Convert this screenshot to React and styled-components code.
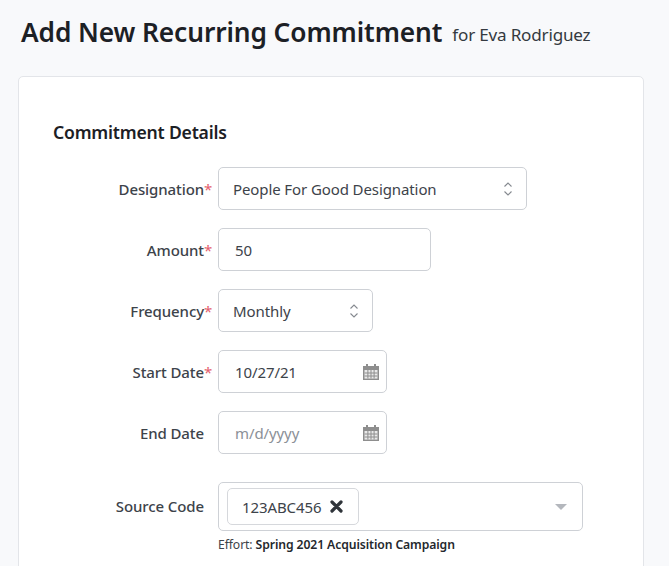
import React from 'react'
import styled, { createGlobalStyle } from 'styled-components'

const GlobalStyle = createGlobalStyle`
	html, body {
		margin: 0;
		height: 100%;
		overflow: hidden;
		background: #f8f9fb;
	}
	body {
		font-family: "Noto Sans", "Open Sans", sans-serif;
		color: #212529;
	}
`

const Page = styled.div`
	padding: 14px 25px 0 18px;
	height: 566px;
	box-sizing: border-box;
	overflow: hidden;
`

const Header = styled.header`
	display: flex;
	align-items: flex-start;
	gap: 10px;
	padding-left: 3px;
	height: 46px;
`

const Title = styled.h1`
	margin: 0;
	font-size: 26.3px;
	line-height: 36px;
	font-weight: 600;
	color: #1c2025;
	letter-spacing: -0.1px;
`

const Subtitle = styled.span`
	margin-top: 9px;
	font-size: 17.1px;
	line-height: 24px;
	color: #343a40;
	letter-spacing: -0.2px;
`

const Card = styled.section`
	margin-top: 16px;
	background: #fff;
	border: 1px solid #e3e5e9;
	border-radius: 5px;
	padding: 43px 34px 60px;
	height: 600px;
	box-sizing: border-box;
`

const SectionTitle = styled.h2`
	margin: 0 0 23px;
	font-size: 17.6px;
	line-height: 24px;
	font-weight: 600;
	color: #1c2025;
	letter-spacing: -0.2px;
`

const Form = styled.div`
	display: flex;
	flex-direction: column;
	gap: 18px;
`

const Row = styled.div`
	display: grid;
	grid-template-columns: 151px 1fr;
	column-gap: 14px;
	align-items: ${(p) => (p.$top ? 'start' : 'center')};
	margin-top: ${(p) => p.$push || 0}px;
`

const Label = styled.label`
	justify-self: end;
	position: relative;
	font-size: 15px;
	font-weight: 500;
	color: #3d434a;
	letter-spacing: -0.1px;
	line-height: 20px;
	margin-top: ${(p) => (p.$top ? 14 : 0)}px;
	${(p) => p.$required && `
		&::after {
			content: '*';
			position: absolute;
			left: 100%;
			top: 0;
			color: #e4606d;
			font-weight: 400;
		}
	`}
`

const Control = styled.div`
	display: flex;
	align-items: center;
	justify-content: space-between;
	box-sizing: border-box;
	width: ${(p) => p.$width}px;
	height: 43px;
	padding: ${(p) => p.$padding || '0 13px 0 14px'};
	background: #fff;
	border: 1px solid #ced1d6;
	border-radius: 5px;
	font-size: 15px;
	letter-spacing: -0.1px;
	color: ${(p) => (p.$placeholder ? '#8b9097' : '#3d434a')};
`

const MultiControl = styled(Control)`
	height: 49px;
	padding: 0 15px 0 8px;
`

const Chip = styled.div`
	display: flex;
	align-items: center;
	gap: 9px;
	height: 37px;
	padding: 0 15px 0 14px;
	box-sizing: border-box;
	border: 1px solid #d6d8dc;
	border-radius: 5px;
	color: #3d434a;
`

const Help = styled.div`
	margin-top: 6px;
	font-size: 12.2px;
	line-height: 16px;
	color: #3d434a;
	letter-spacing: -0.1px;

	strong {
		font-weight: 600;
		color: #24282d;
	}
`

const Caret = styled.span`
	width: 0;
	height: 0;
	border-left: 6.5px solid transparent;
	border-right: 6.5px solid transparent;
	border-top: 6px solid #b4b7bd;
`

const Updown = () => (
	<svg width="10" height="16" viewBox="0 0 10 16" fill="none" stroke="#85898f" strokeWidth="1.1">
		<path d="M1.5 5.5 5 2l3.5 3.5" />
		<path d="M1.5 10.5 5 14l3.5-3.5" />
	</svg>
)

const Calendar = () => (
	<svg width="16" height="16" viewBox="0 0 16 16">
		<path fill="#8e8e8e" d="M3 0h2v2h6V0h2v2h3v14H0V2h3z" />
		<path fill="#e9e9e9" d="M1.5 6h13v8.6h-13z" />
		<path fill="#8e8e8e" d="M1.5 8.4h13v1h-13zM1.5 11.4h13v1h-13zM4.4 6h1v8.6h-1zM7.5 6h1v8.6h-1zM10.6 6h1v8.6h-1z" />
	</svg>
)

const Remove = () => (
	<svg width="13" height="13" viewBox="0 0 13 13" stroke="#2f343a" strokeWidth="3.2" strokeLinecap="round">
		<path d="M2 2l9 9M11 2l-9 9" />
	</svg>
)

const App = () => (
	<Page>
		<GlobalStyle />
		<Header>
			<Title>Add New Recurring Commitment</Title>
			<Subtitle>for Eva Rodriguez</Subtitle>
		</Header>
		<Card>
			<SectionTitle>Commitment Details</SectionTitle>
			<Form>
				<Row>
					<Label $required>Designation</Label>
					<Control $width={309}>People For Good Designation<Updown /></Control>
				</Row>
				<Row>
					<Label $required>Amount</Label>
					<Control $width={213} $padding="0 16px">50</Control>
				</Row>
				<Row>
					<Label $required>Frequency</Label>
					<Control $width={155}>Monthly<Updown /></Control>
				</Row>
				<Row>
					<Label $required>Start Date</Label>
					<Control $width={169} $padding="0 7px 0 16px">10/27/21<Calendar /></Control>
				</Row>
				<Row>
					<Label>End Date</Label>
					<Control $width={169} $padding="0 7px 0 16px" $placeholder>m/d/yyyy<Calendar /></Control>
				</Row>
				<Row $top $push={10}>
					<Label $top>Source Code</Label>
					<div>
						<MultiControl $width={365}>
							<Chip>123ABC456<Remove /></Chip>
							<Caret />
						</MultiControl>
						<Help>Effort: <strong>Spring 2021 Acquisition Campaign</strong></Help>
					</div>
				</Row>
			</Form>
		</Card>
	</Page>
)

export default App
